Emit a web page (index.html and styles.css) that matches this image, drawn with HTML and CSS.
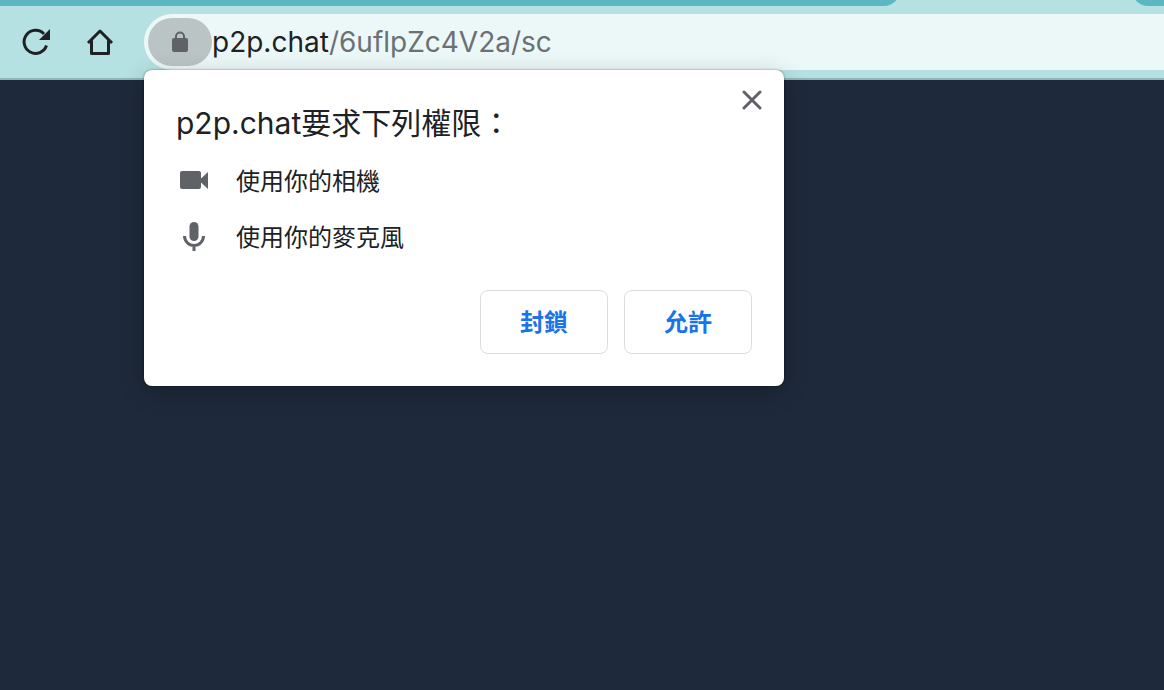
FILE: index.html
```html
<!DOCTYPE html>
<html lang="zh-Hant">
<head>
<meta charset="utf-8">
<title>p2p.chat</title>
<link rel="stylesheet" href="styles.css">
</head>
<body>
<div class="tabs"><div class="tab-strip"></div><div class="tab-strip-end"></div></div>
<header class="toolbar">
  <button class="tool" aria-label="重新載入">
    <svg width="32" height="32" viewBox="0 0 32 32"><path d="M26.500 19.500A11.500 11.500 0 1 1 24 8" fill="none" stroke="#202124" stroke-width="3"/><path d="M30 3v11H19z" fill="#202124"/></svg>
  </button>
  <button class="tool" aria-label="首頁">
    <svg width="32" height="32" viewBox="0 0 32 32"><path d="M4 17 16 5l12 12M7.500 14.500v13h17v-13" fill="none" stroke="#202124" stroke-width="3" stroke-linejoin="round"/></svg>
  </button>
  <div class="address">
    <button class="site-info" aria-label="網站資訊">
      <svg width="16" height="22" viewBox="0 0 16 22"><path d="M4 9V5.500a4 4 0 0 1 8 0V9" fill="none" stroke="#5f6368" stroke-width="2"/><rect y="7" width="16" height="14" rx="2" fill="#5f6368"/></svg>
    </button>
    <div class="url" role="textbox" contenteditable="true" spellcheck="false" aria-label="網址">p2p.chat<span class="path">/6uflpZc4V2a/sc</span></div>
  </div>
</header>
<main class="page"></main>
<section class="prompt" role="dialog" aria-labelledby="prompt-title">
  <button class="close" aria-label="關閉">
    <svg width="20" height="20" viewBox="0 0 20 20"><path d="M2 2l16 16M18 2L2 18" stroke="#5f6368" stroke-width="3" stroke-linecap="round"/></svg>
  </button>
  <h1 class="title" id="prompt-title">p2p.chat要求下列權限：</h1>
  <ul class="permissions">
    <li class="permission">
      <svg width="36" height="32" viewBox="0 0 36 32"><path d="M6 5h17a2 2 0 0 1 2 2v5.500l7-6.500v17l-7-6.500V21a2 2 0 0 1-2 2H6a2 2 0 0 1-2-2V7a2 2 0 0 1 2-2z" fill="#5f6368"/></svg>
      使用你的相機
    </li>
    <li class="permission">
      <svg width="36" height="32" viewBox="0 0 36 32"><rect x="13.500" y="0" width="9" height="19" rx="4.500" fill="#5f6368"/><path d="M8.500 14a9.500 9.500 0 0 0 19 0M18 23v6" fill="none" stroke="#5f6368" stroke-width="3"/></svg>
      使用你的麥克風
    </li>
  </ul>
  <div class="actions">
    <button class="action">封鎖</button>
    <button class="action">允許</button>
  </div>
</section>
</body>
</html>
```
FILE: styles.css
```css
* { box-sizing: border-box; }
body {
  margin: 0;
  min-height: 100vh;
  display: flex;
  flex-direction: column;
  background: #1e293b;
  color: #202124;
  font-family: Inter, "Noto Sans CJK TC", sans-serif;
}
button { padding: 0; border: 0; background: none; font: inherit; }
svg { display: block; flex: none; }
.tabs {
  display: flex;
  justify-content: space-between;
  height: 6px;
  overflow: hidden;
  background: #b5e1e3;
}
.tab-strip, .tab-strip-end { height: 16px; margin-top: -10px; background: #5bb8c0; }
.tab-strip { width: 900px; border-bottom-right-radius: 16px; }
.tab-strip-end { width: 32px; border-bottom-left-radius: 16px; }
.toolbar {
  display: flex;
  align-items: center;
  gap: 32px;
  height: 74px;
  padding-left: 20px;
  background: #b5e1e3;
  border-bottom: 2px solid #8fb3b6;
}
.tool { flex: none; }
.address {
  flex: 1;
  display: flex;
  align-items: center;
  height: 56px;
  margin-left: -4px;
  padding-left: 4px;
  border-radius: 28px 0 0 28px;
  background: #ecf8f8;
}
.site-info {
  display: flex;
  align-items: center;
  justify-content: center;
  width: 64px;
  height: 48px;
  border-radius: 24px;
  background: #bbc4c5;
}
.url { font-size: 28px; line-height: 36px; white-space: nowrap; }
.path { color: #6b7073; }
.page { flex: 1; }
.prompt {
  position: absolute;
  top: 70px;
  left: 144px;
  width: 640px;
  padding: 32px;
  border-radius: 8px;
  background: #fff;
  box-shadow: 0 0 2px rgba(0, 0, 0, .5), 0 6px 24px rgba(0, 0, 0, .22);
}
.close { position: absolute; top: 20px; right: 22px; }
.title { margin: 0; font-size: 30px; font-weight: 400; line-height: 42px; }
.permissions {
  display: grid;
  gap: 24px;
  margin: 22px 0 36px;
  padding: 0;
  list-style: none;
}
.permission {
  display: flex;
  align-items: center;
  gap: 24px;
  font-size: 24px;
  line-height: 32px;
}
.actions { display: flex; justify-content: flex-end; gap: 16px; }
.action {
  width: 128px;
  height: 64px;
  padding-bottom: 4px;
  border: 1px solid #dadce0;
  border-radius: 8px;
  color: #1a73e8;
  font-size: 24px;
  font-weight: 700;
}
```
